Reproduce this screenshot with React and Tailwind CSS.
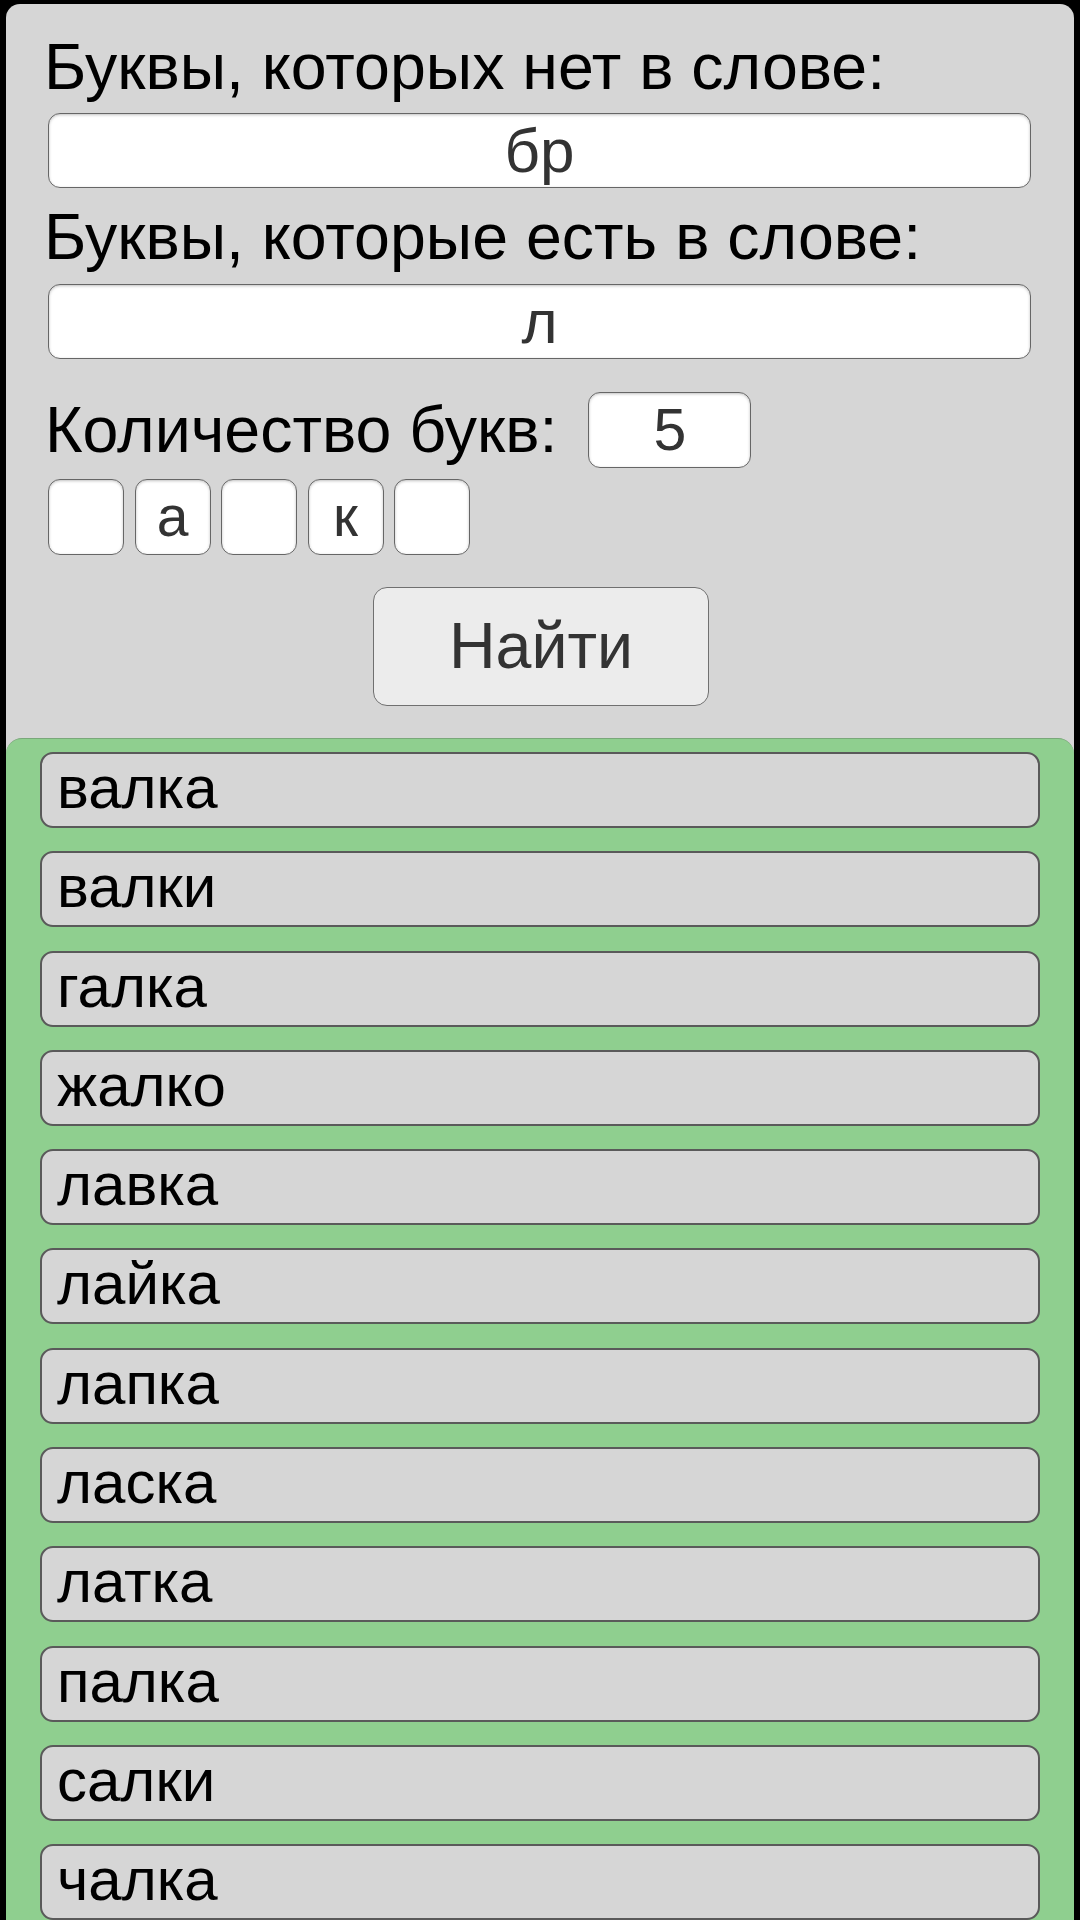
import React, { useState } from 'react';

const words = ['валка', 'валки', 'галка', 'жалко', 'лавка', 'лайка', 'лапка', 'ласка', 'латка', 'палка', 'салки', 'чалка'];

const font = { fontFamily: '"Liberation Sans", Arial, sans-serif' };

const App = () => {
  const [missing, setMissing] = useState('бр');
  const [present, setPresent] = useState('л');
  const [count, setCount] = useState('5');
  const [mask, setMask] = useState(['', 'а', '', 'к', '']);

  const setLetter = (i, v) => {
    const next = [...mask];
    next[i] = v.slice(-1);
    setMask(next);
  };

  const inputCls =
    'bg-white border-[1.5px] border-[#666] rounded-[12px] shadow-[inset_0_1px_3px_rgba(0,0,0,0.25)] text-[#333] text-center outline-none';

  return (
    <div className="w-[1080px] h-[1920px] overflow-hidden bg-black pt-[4px] px-[6px]" style={font}>
      <div className="h-full bg-[#d6d6d6] rounded-t-[14px] flex flex-col">
        <div className="px-[42px] pt-[29px]">
          <div className="text-[64.5px] leading-[68px] text-black -ml-[4px]">Буквы, которых нет в слове:</div>
          <input
            value={missing}
            onChange={(e) => setMissing(e.target.value)}
            className={`${inputCls} block w-[983px] h-[75px] mt-[12px] text-[62px]`}
          />
          <div className="text-[64.5px] leading-[68px] text-black mt-[15px] -ml-[4px]">Буквы, которые есть в слове:</div>
          <input
            value={present}
            onChange={(e) => setPresent(e.target.value)}
            className={`${inputCls} block w-[983px] h-[75px] mt-[13px] text-[62px]`}
          />

          <div className="flex items-center mt-[33px] h-[76px]">
            <span className="text-[64.5px] leading-[68px] text-black -ml-[3px]">Количество букв:</span>
            <input
              value={count}
              onChange={(e) => setCount(e.target.value)}
              className={`${inputCls} w-[163px] h-[76px] ml-[31px] text-[59px]`}
            />
          </div>

          <div className="flex gap-[10.5px] mt-[11px]">
            {mask.map((ch, i) => (
              <input
                key={i}
                value={ch}
                onChange={(e) => setLetter(i, e.target.value)}
                className={`${inputCls} w-[76px] h-[76px] text-[57px]`}
              />
            ))}
          </div>

          <div className="flex justify-center mt-[32px]">
            <button className="w-[336px] h-[119px] bg-[#ececec] border-[1.5px] border-[#707070] rounded-[14px] text-[64.5px] text-[#333] ml-[2px]">
              Найти
            </button>
          </div>
        </div>

        <div className="flex-1 mt-[32px] bg-[#8fcf8f] border-t border-[#7aa87a] rounded-t-[16px] pt-[13px] px-[34px] flex flex-col gap-[23.3px]">
          {words.map((w) => (
            <div
              key={w}
              className="shrink-0 h-[76px] bg-[#d6d6d6] border-2 border-[#5a5a5a] rounded-[13px] pl-[15px] text-[60px] leading-[68px] text-black"
            >
              {w}
            </div>
          ))}
        </div>
      </div>
    </div>
  );
};

export default App;
